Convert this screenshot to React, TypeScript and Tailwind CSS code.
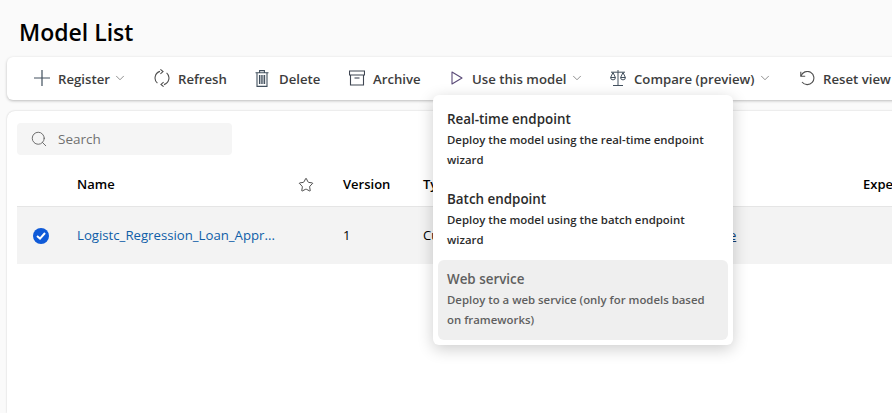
import { ChevronDown, Search, Star } from "lucide-react";

const font = { fontFamily: '"Open Sans", "Noto Sans", sans-serif' };

const PlusIcon = () => (
  <svg width="16" height="16" viewBox="0 0 16 16" fill="none" stroke="#42505e" strokeWidth="1.2">
    <path d="M8 0v16M0 8h16" />
  </svg>
);

const RefreshIcon = () => (
  <svg width="16" height="18" viewBox="0 0 16 18" fill="none" stroke="#505050" strokeWidth="1.1">
    <path d="M6 2.4A6.9 6.9 0 0 0 3.4 14.2" />
    <path d="M10 15.6A6.9 6.9 0 0 0 12.6 3.8" />
    <path d="M6.4 .4 9 2.6 6.4 4.8" />
    <path d="M9.6 17.6 7 15.4 9.6 13.2" />
  </svg>
);

const TrashIcon = () => (
  <svg width="14" height="17" viewBox="0 0 14 17" fill="none" stroke="#42505e" strokeWidth="1.1">
    <path d="M.5 2.8h13M4.6 2.8V.6h4.8v2.2" />
    <path d="M2 2.8v13.6h10V2.8" />
    <path d="M4.5 5v9M6.2 5v9M7.9 5v9M9.6 5v9" />
  </svg>
);

const ArchiveIcon = () => (
  <svg width="16" height="16" viewBox="0 0 16 16" fill="none" stroke="#3f4652" strokeWidth="1.1">
    <path d="M.5 1h15v4H.5z" />
    <path d="M1.5 5v10h13V5" />
    <path d="M5.5 8h5" />
  </svg>
);

const PlayIcon = () => (
  <svg width="12" height="14" viewBox="0 0 12 14" fill="none" stroke="#5a4a78" strokeWidth="1.1">
    <path d="M1 1v12l10-6z" strokeLinejoin="round" />
  </svg>
);

const ScaleIcon = () => (
  <svg width="16" height="16" viewBox="0 0 16 16" fill="none" stroke="#42505e" strokeWidth="1">
    <path d="M8 0v15M3 15.5h10M1 2.2h14" />
    <path d="M3 2.5.6 7.5h4.8zM13 2.5l-2.4 5h4.8z" />
    <path d="M.6 7.5a2.4 2.4 0 0 0 4.8 0M10.6 7.5a2.4 2.4 0 0 0 4.8 0" />
  </svg>
);

const ResetIcon = () => (
  <svg width="15" height="15" viewBox="0 0 15 15" fill="none" stroke="#505050" strokeWidth="1.1">
    <path d="M.8.8v4.4h4.4" />
    <path d="M1 5A6.6 6.6 0 1 1 2 11" />
  </svg>
);

const tools = [
  { icon: <PlusIcon />, label: "Register", menu: true, width: "w-[120px]", gap: "gap-2" },
  { icon: <RefreshIcon />, label: "Refresh", width: "w-[101px]", gap: "gap-2" },
  { icon: <TrashIcon />, label: "Delete", width: "w-[94px]", gap: "gap-[10px]" },
  { icon: <ArchiveIcon />, label: "Archive", width: "w-[102px]", gap: "gap-2" },
  { icon: <PlayIcon />, label: "Use this model", menu: true, width: "w-[159px]", gap: "gap-[9px]" },
  { icon: <ScaleIcon />, label: "Compare (preview)", menu: true, width: "w-[190px]", gap: "gap-2" },
  { icon: <ResetIcon />, label: "Reset view", width: "w-[100px]", gap: "gap-2" },
];

const menuItems = [
  { title: "Real-time endpoint", text: "Deploy the model using the real-time endpoint wizard" },
  { title: "Batch endpoint", text: "Deploy the model using the batch endpoint wizard" },
  { title: "Web service", text: "Deploy to a web service (only for models based on frameworks)", disabled: true },
];

export default function App() {
  return (
    <div
      className="relative flex h-[413px] w-[892px] flex-col overflow-hidden bg-[#fafafa] pl-[7px] text-[#242424]"
      style={font}
    >
      <h1 className="mt-[17px] ml-3 h-[30px] text-[23px] leading-[30px] font-semibold text-black">Model List</h1>

      <div className="mt-[10px] flex h-[43px] w-[920px] shrink-0 items-center rounded-md bg-white pl-[27px] shadow-[0_1px_3px_rgba(0,0,0,0.25)]">
        {tools.map((t) => (
          <div key={t.label} className={`flex shrink-0 items-center text-[13.2px] font-[550] text-[#3d3d3d] ${t.gap} ${t.width}`}>
            {t.icon}
            <span className="pt-[2px] whitespace-nowrap">{t.label}</span>
            {t.menu && <ChevronDown size={14} strokeWidth={1.2} className="-ml-[5px] text-[#616161]" />}
          </div>
        ))}
      </div>

      <div className="mt-[11px] flex w-[920px] flex-1 flex-col rounded-tl-lg bg-white pt-3 pl-[10px] shadow-[0_0_2px_rgba(0,0,0,0.2)]">
        <div className="flex h-8 w-[215px] items-center gap-[10px] rounded bg-[#f5f5f5] pl-[13px] text-[13.5px] text-[#707070]">
          <Search size={18} strokeWidth={1.2} className="text-[#616161]" />
          Search
        </div>

        <div className="mt-[10px] flex h-[42px] items-center border-b border-[#e5e5e5] pb-[2px] text-[13px] font-semibold text-black">
          <span className="ml-[60px] w-[221px] shrink-0">Name</span>
          <Star size={16} strokeWidth={1.3} className="shrink-0 text-[#333333]" />
          <span className="ml-[29px] w-[80px] shrink-0">Version</span>
          <span className="w-[440px] shrink-0">Type</span>
          <span className="shrink-0">Experiment</span>
        </div>

        <div className="flex h-[57px] items-center bg-[#f3f3f3] text-[13px]">
          <div className="ml-4 flex h-4 w-4 shrink-0 items-center justify-center rounded-full bg-[#0f5ad8]">
            <svg width="10" height="8" viewBox="0 0 10 8" fill="none" stroke="white" strokeWidth="2">
              <path d="M1 4l3 2.6L9 1" />
            </svg>
          </div>
          <span className="ml-[28px] w-[266px] shrink-0 text-[13.2px] text-[#0f5ea8]">Logistc_Regression_Loan_Appr...</span>
          <span className="w-[80px] shrink-0 text-black">1</span>
          <span className="w-[306px] shrink-0 text-black">Custom</span>
          <span className="text-[#0f3f7a] underline">e</span>
        </div>
      </div>

      <div className="absolute top-[95px] left-[433px] flex w-[300px] flex-col rounded-md bg-white p-[5px] shadow-[0_4px_16px_rgba(0,0,0,0.2)]">
        {menuItems.map((m) => (
          <div
            key={m.title}
            className={`h-[80px] rounded-md px-[9px] pt-[9px] ${m.disabled ? "bg-[#efefef] text-[#5f5f5f]" : "text-[#2b2b2b]"}`}
          >
            <div className="text-[13.4px] leading-[21px] font-[550]">{m.title}</div>
            <div className="w-[266px] text-[11.4px] leading-5 font-[550]">{m.text}</div>
          </div>
        ))}
      </div>
    </div>
  );
}
